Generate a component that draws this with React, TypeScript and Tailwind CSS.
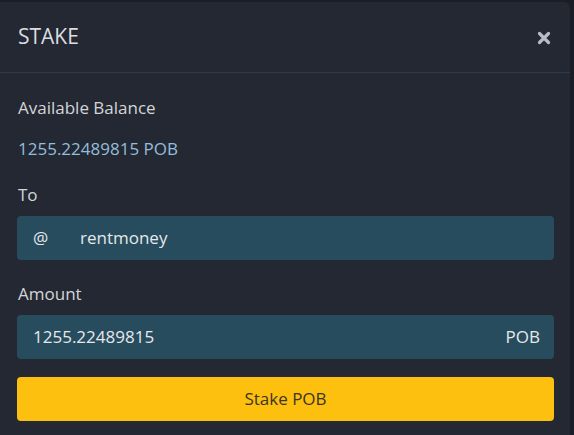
import React from "react";

export default function App() {
  return (
    <div
      className="w-[574px] h-[435px] bg-[#1b1e27] overflow-hidden"
      style={{ fontFamily: '"Open Sans", "Noto Sans", sans-serif' }}
    >
      <div className="mt-[2px] w-[570px] h-[433px] bg-[#242833] rounded-tr-[6px]">
        <div className="h-[71px] flex items-center justify-between pl-[18px] pr-[19px] border-b border-[#343946]">
          <span className="text-[21px] text-[#dcdde0]">STAKE</span>
          <svg width="14" height="14" viewBox="0 0 14 14" className="mt-[1px]">
            <path d="M2.5 2.5 L11.5 11.5 M11.5 2.5 L2.5 11.5" stroke="#b9bcc4" strokeWidth="3.2" strokeLinecap="round" />
          </svg>
        </div>
        <div className="pl-[17px] pr-[16px] pt-[24px]">
          <div className="text-[17px] text-[#d3d5d9] pl-[1px] leading-[22px]">Available Balance</div>
          <div className="mt-[19px] text-[17px] text-[#93bddb] pl-[1px] leading-[22px]">1255.22489815 POB</div>
          <div className="mt-[24px] text-[17px] text-[#d3d5d9] pl-[1px] leading-[22px]">To</div>
          <div className="mt-[10px] h-[44px] rounded-[4px] bg-[#264c5e] flex items-center text-[17px] text-[#e6e8ea]">
            <span className="pl-[16px] w-[63px]">@</span>
            <span>rentmoney</span>
          </div>
          <div className="mt-[23px] text-[17px] text-[#d3d5d9] pl-[1px] leading-[22px]">Amount</div>
          <div className="mt-[10px] h-[44px] rounded-[4px] bg-[#264c5e] flex items-center justify-between pl-[16px] pr-[14px] text-[17px] text-[#e6e8ea]">
            <span>1255.22489815</span>
            <span>POB</span>
          </div>
          <div className="mt-[18px] h-[44px] rounded-[4px] bg-[#fdc00e] flex items-center justify-center text-[17px] text-[#3b3423]">
            Stake POB
          </div>
        </div>
      </div>
    </div>
  );
}
